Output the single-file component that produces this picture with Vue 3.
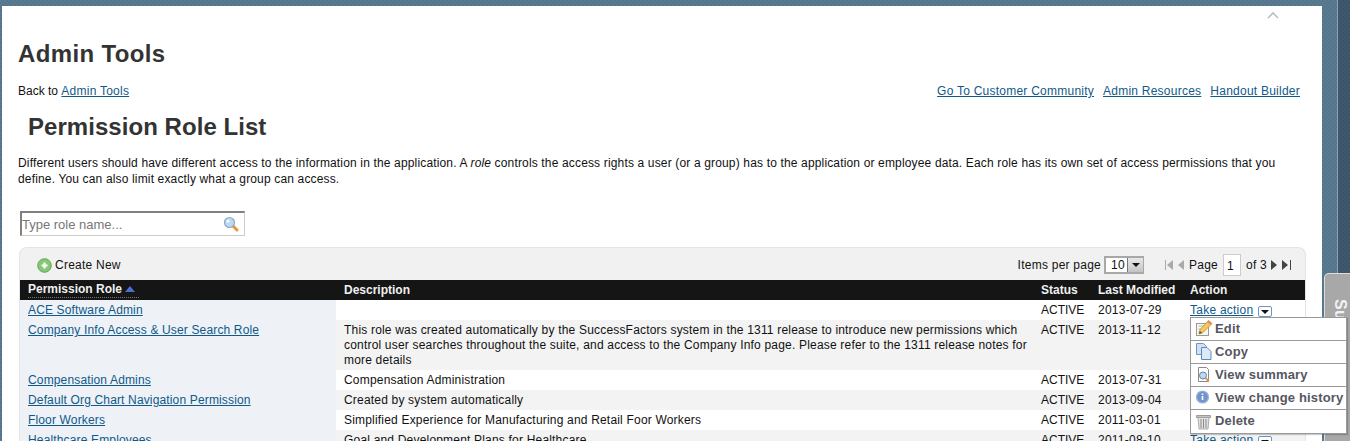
<template>
  <div class="desktop">
    <div class="sheet">
      <svg class="collapse" width="12" height="8" viewBox="0 0 12 8"><path d="M1 7 L6 2 L11 7" fill="none" stroke="#b4c0cc" stroke-width="1.6" /></svg>
      <h1 class="page-title">Admin Tools</h1>
      <div class="nav-row">
        <span><span class="back">Back to </span><a href="#">Admin Tools</a></span>
        <span class="nav-links">
          <a href="#">Go To Customer Community</a>
          <a href="#">Admin Resources</a>
          <a href="#">Handout Builder</a>
        </span>
      </div>
      <h2 class="list-title">Permission Role List</h2>
      <p class="intro">Different users should have different access to the information in the application. A <i>role</i> controls the access rights a user (or a group) has to the application or employee data. Each role has its own set of access permissions that you define. You can also limit exactly what a group can access.</p>
      <div class="search">
        <span class="search-hint">Type role name...</span>
        <svg width="16" height="16" viewBox="0 0 16 16">
          <line x1="9.500" y1="9.500" x2="14" y2="14" stroke="#e8973a" stroke-width="3" stroke-linecap="round" />
          <circle cx="6.500" cy="6.500" r="5" fill="#bcd8f2" stroke="#8fa9c4" stroke-width="1.200" />
          <circle cx="5" cy="5" r="1.600" fill="#fff" />
        </svg>
      </div>
      <div class="grid-box">
        <div class="toolbar">
          <span class="create">
            <svg width="15" height="15" viewBox="0 0 15 15">
              <circle cx="7.500" cy="7.500" r="6.800" fill="#86c776" stroke="#62a658" />
              <path d="M7.500 4.500v6M4.500 7.500h6" stroke="#fff" stroke-width="2.200" />
            </svg>
            Create New
          </span>
          <span class="pager">
            <span>Items per page</span>
            <span class="select"><span class="select-val">10</span><span class="select-btn"><i class="down"></i></span></span>
            <span class="arrows">
              <svg width="10" height="12" viewBox="0 0 10 12"><path d="M1.500 1v10" stroke="#aaa" stroke-width="1" /><path d="M9 1v10L3 6z" fill="#aaa" /></svg>
              <svg class="prev" width="7" height="12" viewBox="0 0 7 12"><path d="M7 1v10L1 6z" fill="#aaa" /></svg>
            </span>
            <span>Page</span>
            <span class="page-input">1</span>
            <span>of 3</span>
            <svg width="7" height="12" viewBox="0 0 7 12"><path d="M0 1v10l6-5z" fill="#444" /></svg>
            <svg width="10" height="12" viewBox="0 0 10 12"><path d="M0 1v10l6-5z" fill="#444" /><path d="M8.500 1v10" stroke="#444" stroke-width="1" /></svg>
          </span>
        </div>
        <table class="roles">
          <colgroup>
            <col class="c-role" /><col class="c-desc" /><col class="c-status" /><col class="c-date" /><col />
          </colgroup>
          <thead>
            <tr>
              <th><span class="sorted">Permission Role <i class="sort-up"></i></span></th>
              <th>Description</th>
              <th>Status</th>
              <th>Last Modified</th>
              <th>Action</th>
            </tr>
          </thead>
          <tbody>
            <tr v-for="(r, i) in roles" :key="r.name" :class="i % 2 ? 'odd' : 'even'">
              <td class="name"><a href="#">{{ r.name }}</a></td>
              <td class="desc">{{ r.desc }}</td>
              <td class="status">ACTIVE</td>
              <td>{{ r.date }}</td>
              <td class="action"><a href="#">Take action</a> <span class="drop"><i class="down"></i></span></td>
            </tr>
          </tbody>
        </table>
      </div>
      <ul class="menu">
        <li>
          <svg width="18" height="18" viewBox="0 0 18 18">
            <rect x="1.500" y="4.500" width="12" height="12" fill="#f6f6f2" stroke="#9a9a90" />
            <path d="M3.500 7h7M3.500 10h5M3.500 13h3" stroke="#b8b8b0" />
            <path d="M4 15l1-4.500L13.500 1.500l3.500 3L8 13.500z" fill="#f5c85a" stroke="#c08a30" stroke-width=".8" />
            <path d="M13.500 1.500l3.500 3-1.500 1.500-3.500-3z" fill="#e88a60" />
            <path d="M4 15l1-3 2 2z" fill="#555" />
          </svg>
          Edit
        </li>
        <li>
          <svg width="18" height="18" viewBox="0 0 18 18">
            <path d="M1.500 1.500h7l3 3v8h-10z" fill="#cfe0f5" stroke="#6d94c4" />
            <path d="M6.500 5.500h5.500l4 4v8h-9.500z" fill="#dce9f9" stroke="#5f8ac0" />
          </svg>
          Copy
        </li>
        <li>
          <svg width="18" height="18" viewBox="0 0 18 18">
            <path d="M3.500 2.500h8l2 2v12h-10z" fill="#fff" stroke="#8a8a8a" />
            <circle cx="8" cy="10.500" r="3.500" fill="#bcd8f2" stroke="#5f84a8" />
            <path d="M10.800 13.300l3 3" stroke="#e8973a" stroke-width="2" />
          </svg>
          View summary
        </li>
        <li>
          <svg width="18" height="18" viewBox="0 0 18 18">
            <circle cx="7.500" cy="9" r="6" fill="#6f95cf" stroke="#9db3cf" stroke-width="1.200" />
            <path d="M7.500 5.500v1.500M7.500 8v4" stroke="#fff" stroke-width="1.600" />
          </svg>
          View change history
        </li>
        <li>
          <svg width="18" height="18" viewBox="0 0 18 18">
            <path d="M1.500 3.500h14v2h-14z" fill="#c4c4c4" stroke="#8a8a8a" stroke-width=".8" />
            <path d="M3 5.500h11l-1 11.500h-9z" fill="#e2e2e2" stroke="#999" stroke-width=".8" />
            <path d="M6 7v9M8.500 7v9M11 7v9" stroke="#8a8a8a" />
          </svg>
          Delete
        </li>
      </ul>
    </div>
    <div class="side-tab"><span>Su</span></div>
  </div>
</template>

<script setup>
const roles = [
  { name: 'ACE Software Admin', desc: '', date: '2013-07-29' },
  {
    name: 'Company Info Access & User Search Role',
    desc: 'This role was created automatically by the SuccessFactors system in the 1311 release to introduce new permissions which control user searches throughout the suite, and access to the Company Info page. Please refer to the 1311 release notes for more details',
    date: '2013-11-12'
  },
  { name: 'Compensation Admins', desc: 'Compensation Administration', date: '2013-07-31' },
  { name: 'Default Org Chart Navigation Permission', desc: 'Created by system automatically', date: '2013-09-04' },
  { name: 'Floor Workers', desc: 'Simplified Experience for Manufacturing and Retail Foor Workers', date: '2011-03-01' },
  { name: 'Healthcare Employees', desc: 'Goal and Development Plans for Healthcare', date: '2011-08-10' }
]
</script>

<style>
html, body {
  margin: 0;
  height: 441px;
  overflow: hidden;
}
</style>

<style scoped>
.desktop {
  position: relative;
  height: 441px;
  overflow: hidden;
  padding: 6px 0 0 2px;
  box-sizing: border-box;
  background:
    repeating-conic-gradient(rgba(0, 0, 0, .05) 0 25%, transparent 0 50%) 0 0 / 4px 4px,
    linear-gradient(90deg, #587b92 0, #587b92 1337px, #8fa6b6 1337px, #8fa6b6 1338px, #3f586e 1338px);
  font-family: "Liberation Sans", Arial, sans-serif;
  font-size: 12px;
  letter-spacing: .24px;
  color: #111;
}
.sheet {
  position: relative;
  z-index: 1;
  width: 1320px;
  height: 435px;
  background: #fff;
  padding: 35px 0 0 16px;
  box-sizing: border-box;
}
.collapse {
  position: absolute;
  top: 5px;
  left: 1265px;
}
a {
  color: #0f5a8a;
  text-decoration: underline;
}
.page-title {
  margin: 0;
  font-size: 24px;
  line-height: 26px;
  font-weight: bold;
  letter-spacing: .36px;
  color: #333;
}
.nav-row {
  display: flex;
  justify-content: space-between;
  width: 1282px;
  margin-top: 17px;
  line-height: 14px;
}
.back {
  letter-spacing: 0;
}
.nav-links {
  display: flex;
  gap: 9px;
}
.list-title {
  margin: 15px 0 0 10px;
  font-size: 24px;
  line-height: 28px;
  font-weight: bold;
  letter-spacing: .05px;
  color: #333;
}
.intro {
  margin: 14px 0 0;
  width: 1264px;
  line-height: 16px;
  letter-spacing: .155px;
}
.search {
  display: flex;
  align-items: center;
  justify-content: space-between;
  width: 225px;
  height: 25px;
  margin: 24px 0 0 2px;
  box-sizing: border-box;
  border: 1px solid #ccc;
  border-top: 2px solid #808080;
  border-left: 2px solid #808080;
  padding-right: 5px;
}
.search-hint {
  font-size: 13px;
  letter-spacing: 0;
  color: #777;
}
.grid-box {
  width: 1287px;
  margin: 11px 0 0 1px;
  background: #f1f1f1;
  border-radius: 8px 8px 0 0;
  border: 1px solid #e4e4e4;
  border-bottom: 0;
  box-sizing: border-box;
}
.toolbar {
  display: flex;
  justify-content: space-between;
  align-items: center;
  height: 32px;
  padding: 2px 13px 0 17px;
  box-sizing: border-box;
}
.create {
  display: flex;
  align-items: center;
  gap: 3px;
}
.pager {
  display: flex;
  align-items: center;
  gap: 4px;
}
.select {
  display: flex;
  align-items: center;
  justify-content: space-between;
  width: 40px;
  height: 18px;
  margin: 0 16px 0 -1px;
  box-sizing: border-box;
  border: 2px solid #a8a8a8;
  border-right-width: 1px;
  background: #fff;
  padding-left: 5px;
}
.select-btn {
  display: flex;
  align-items: center;
  justify-content: center;
  width: 15px;
  height: 14px;
  background: linear-gradient(#e8e8e8, #c4c4c4);
  border-left: 1px solid #777;
}
.down {
  display: block;
  width: 0;
  height: 0;
  border-left: 4px solid transparent;
  border-right: 4px solid transparent;
  border-top: 4px solid #111;
}
.arrows {
  display: flex;
  gap: 3px;
  align-items: center;
  margin-right: 1px;
}
.page-input {
  width: 18px;
  height: 22px;
  line-height: 22px;
  box-sizing: border-box;
  border: 1px solid #ccc;
  background: #fff;
  padding-left: 3px;
  margin: 0 1px;
}
.roles {
  width: 100%;
  border-collapse: collapse;
  table-layout: fixed;
}
.c-role { width: 316px; }
.c-desc { width: 697px; }
.c-status { width: 57px; }
.c-date { width: 92px; }
th {
  height: 20px;
  padding: 0 8px;
  background: #151515;
  color: #f0f0f0;
  text-align: left;
  font-weight: bold;
  white-space: nowrap;
  letter-spacing: 0;
}
td {
  padding: 3px 8px 2px;
  line-height: 15px;
  vertical-align: top;
}
td.desc {
  padding-right: 0;
  letter-spacing: .19px;
}
td.status {
  letter-spacing: 0;
}
td.name {
  letter-spacing: .15px;
}
tr.even td { background: #fff; }
tr.odd td { background: #f3f3f3; }
tr.even td.name, tr.odd td.name { background: #eef1f6; }
.sorted {
  display: inline-block;
  padding-right: 4px;
  line-height: 15px;
  border-bottom: 1px dotted #777;
}
.sort-up {
  display: inline-block;
  width: 0;
  height: 0;
  margin-bottom: 1px;
  border-left: 5px solid transparent;
  border-right: 5px solid transparent;
  border-bottom: 6px solid #4a6fd0;
}
.action {
  white-space: nowrap;
}
.drop {
  display: inline-flex;
  align-items: center;
  justify-content: center;
  width: 12px;
  height: 9px;
  margin: 3px 0 0 1px;
  vertical-align: top;
  border: 1px solid #6d94c4;
  border-radius: 2px;
  background: #fff;
}
.menu {
  position: absolute;
  left: 1188px;
  top: 311px;
  width: 157px;
  margin: 0;
  padding: 0;
  list-style: none;
  background: #fff;
  border: 1px solid #999;
  box-sizing: border-box;
  box-shadow: 1px 1px 1px rgba(0, 0, 0, .2);
}
.menu li {
  display: flex;
  align-items: center;
  gap: 2px;
  height: 23px;
  padding: 0 0 2px 4px;
  box-sizing: border-box;
  border-bottom: 1px solid #999;
  font-size: 13px;
  font-weight: bold;
  letter-spacing: .15px;
  color: #56565f;
  white-space: nowrap;
}
.menu li:last-child {
  border-bottom: 0;
}
.side-tab {
  position: absolute;
  left: 1324px;
  top: 273px;
  width: 30px;
  height: 180px;
  box-sizing: border-box;
  background: #a8a8a8;
  border-radius: 5px 0 0 0;
  border-top: 1px solid #ddd;
  border-left: 1px solid #ddd;
  color: #f2f2f2;
  font-size: 16px;
  font-weight: bold;
}
.side-tab span {
  display: block;
  width: 24px;
  margin: 28px 0 0 3px;
  transform: rotate(90deg);
}
</style>
